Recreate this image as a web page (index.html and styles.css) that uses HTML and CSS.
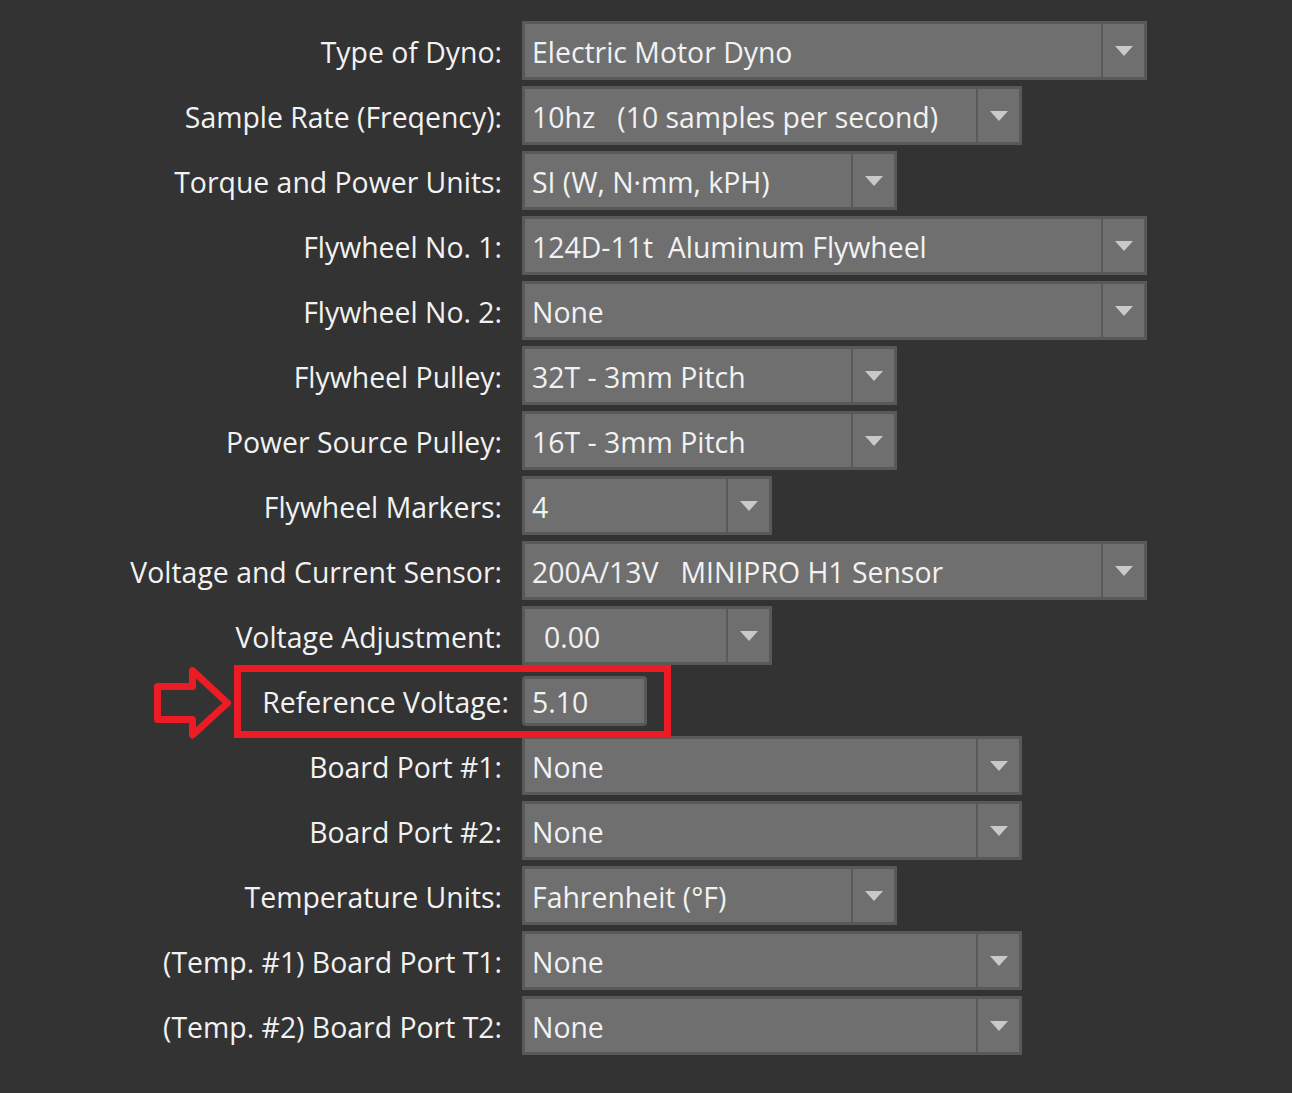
FILE: index.html
```html
<!DOCTYPE html>
<html lang="en">
<head>
    <meta charset="UTF-8">
    <title>Dyno Settings</title>
    <link rel="stylesheet" href="styles.css">
</head>
<body>

<div class="settings">
    <div class="row">
        <div class="label">Type of Dyno:</div>
        <div class="select w625"><div class="value">Electric Motor Dyno</div><div class="btn"><span class="caret"></span></div></div>
    </div>
    <div class="row">
        <div class="label">Sample Rate (Freqency):</div>
        <div class="select w500"><div class="value">10hz&nbsp;&nbsp;&nbsp;(10 samples per second)</div><div class="btn"><span class="caret"></span></div></div>
    </div>
    <div class="row">
        <div class="label">Torque and Power Units:</div>
        <div class="select w375"><div class="value">SI (W, N·mm, kPH)</div><div class="btn"><span class="caret"></span></div></div>
    </div>
    <div class="row">
        <div class="label">Flywheel No. 1:</div>
        <div class="select w625"><div class="value">124D-11t&nbsp;&nbsp;Aluminum Flywheel</div><div class="btn"><span class="caret"></span></div></div>
    </div>
    <div class="row">
        <div class="label">Flywheel No. 2:</div>
        <div class="select w625"><div class="value">None</div><div class="btn"><span class="caret"></span></div></div>
    </div>
    <div class="row">
        <div class="label">Flywheel Pulley:</div>
        <div class="select w375"><div class="value">32T - 3mm Pitch</div><div class="btn"><span class="caret"></span></div></div>
    </div>
    <div class="row">
        <div class="label">Power Source Pulley:</div>
        <div class="select w375"><div class="value">16T - 3mm Pitch</div><div class="btn"><span class="caret"></span></div></div>
    </div>
    <div class="row">
        <div class="label">Flywheel Markers:</div>
        <div class="select w250"><div class="value">4</div><div class="btn"><span class="caret"></span></div></div>
    </div>
    <div class="row">
        <div class="label">Voltage and Current Sensor:</div>
        <div class="select w625"><div class="value">200A/13V&nbsp;&nbsp;&nbsp;MINIPRO H1 Sensor</div><div class="btn"><span class="caret"></span></div></div>
    </div>
    <div class="row">
        <div class="label">Voltage Adjustment:</div>
        <div class="select w250 spin"><div class="value">0.00</div><div class="btn"><span class="caret"></span></div></div>
    </div>
    <div class="row">
        <div class="label label-ref">Reference Voltage:</div>
        <div class="text-input">5.10</div>
    </div>
    <div class="row">
        <div class="label">Board Port #1:</div>
        <div class="select w500"><div class="value">None</div><div class="btn"><span class="caret"></span></div></div>
    </div>
    <div class="row">
        <div class="label">Board Port #2:</div>
        <div class="select w500"><div class="value">None</div><div class="btn"><span class="caret"></span></div></div>
    </div>
    <div class="row">
        <div class="label">Temperature Units:</div>
        <div class="select w375"><div class="value">Fahrenheit (°F)</div><div class="btn"><span class="caret"></span></div></div>
    </div>
    <div class="row">
        <div class="label">(Temp. #1) Board Port T1:</div>
        <div class="select w500"><div class="value">None</div><div class="btn"><span class="caret"></span></div></div>
    </div>
    <div class="row">
        <div class="label">(Temp. #2) Board Port T2:</div>
        <div class="select w500"><div class="value">None</div><div class="btn"><span class="caret"></span></div></div>
    </div>
</div>

<!-- annotation over the Reference Voltage row -->
<div class="highlight-box"></div>
<svg class="highlight-arrow" width="90" height="80" viewBox="150 664 90 80">
    <polygon points="157.5,686.5 192.5,686.5 192.5,670.5 227.5,703 192.5,735 192.5,719.5 157.5,719.5"
             fill="none" stroke="#ed1c24" stroke-width="7" stroke-linejoin="round"/>
</svg>

</body>
</html>
```

FILE: styles.css
```css
:root { --bg: #333333; --field: #6f6f6f; --edge: #595959; --text: #f2f2f2; --red: #ed1c24; }
body { background-color: var(--bg); color: var(--text); font-family: 'Open Sans', 'Noto Sans', sans-serif; font-size: 28.4px; margin: 0; height: 1093px; overflow: hidden; }

/* Form rows */
.settings { padding-top: 21px; }
.row { display: flex; align-items: center; height: 59px; margin-bottom: 6px; }
.label { width: 502px; margin-right: 20px; text-align: right; white-space: nowrap; padding-top: 3px; }
.label-ref { width: 509px; margin-right: 13px; }

/* Combo boxes */
.select { display: flex; height: 59px; box-sizing: border-box; border: 3px solid var(--edge); background: var(--field); }
.select .value { flex: 1; padding-left: 7px; padding-top: 3px; display: flex; align-items: center; white-space: nowrap; overflow: hidden; }
.select .btn { width: 41px; border-left: 2px solid var(--edge); display: flex; align-items: center; justify-content: center; }
.caret { width: 0; height: 0; border-left: 9px solid transparent; border-right: 9px solid transparent; border-top: 10px solid #c9c9c9; }
.spin .value { padding-left: 19px; }
.w625 { width: 625px; }
.w500 { width: 500px; }
.w375 { width: 375px; }
.w250 { width: 250px; }

/* Plain text field */
.text-input { width: 125px; height: 50px; box-sizing: border-box; border: 3px solid var(--edge); border-radius: 4px; background: var(--field); padding-left: 7px; padding-top: 3px; display: flex; align-items: center; }

/* Red annotation */
.highlight-box { position: absolute; left: 234px; top: 665px; width: 437px; height: 73px; box-sizing: border-box; border: 7px solid var(--red); }
.highlight-arrow { position: absolute; left: 150px; top: 664px; }
```
